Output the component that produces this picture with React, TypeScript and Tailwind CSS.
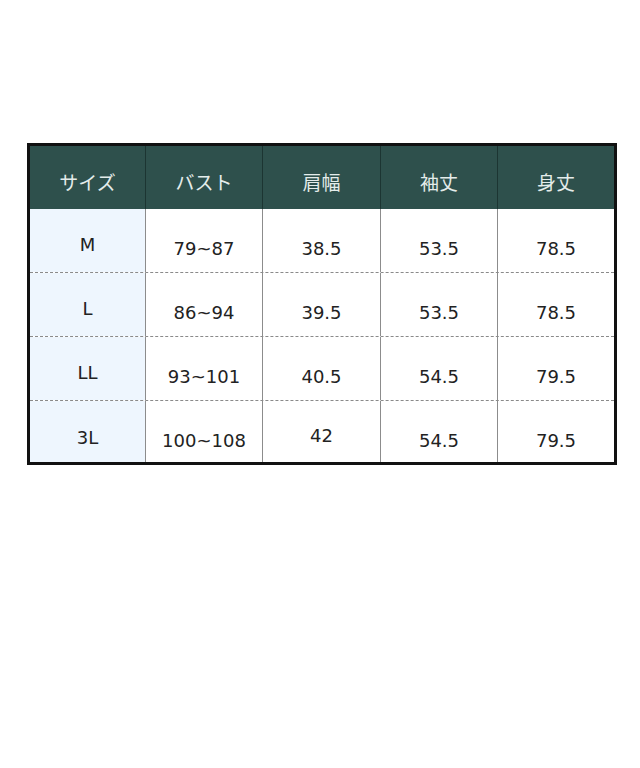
import React from "react";

const headers = ["サイズ", "バスト", "肩幅", "袖丈", "身丈"];

type Cell = { t: string; pt: string };
const rows: { h: string; cells: Cell[] }[] = [
  {
    h: "h-[64px]",
    cells: [
      { t: "M", pt: "pt-[8px]" },
      { t: "79~87", pt: "pt-[16px]" },
      { t: "38.5", pt: "pt-[16px]" },
      { t: "53.5", pt: "pt-[16px]" },
      { t: "78.5", pt: "pt-[16px]" },
    ],
  },
  {
    h: "h-[64px]",
    cells: [
      { t: "L", pt: "pt-[8px]" },
      { t: "86~94", pt: "pt-[16px]" },
      { t: "39.5", pt: "pt-[16px]" },
      { t: "53.5", pt: "pt-[16px]" },
      { t: "78.5", pt: "pt-[16px]" },
    ],
  },
  {
    h: "h-[64px]",
    cells: [
      { t: "LL", pt: "pt-[8px]" },
      { t: "93~101", pt: "pt-[16px]" },
      { t: "40.5", pt: "pt-[16px]" },
      { t: "54.5", pt: "pt-[16px]" },
      { t: "79.5", pt: "pt-[16px]" },
    ],
  },
  {
    h: "h-[61px]",
    cells: [
      { t: "3L", pt: "pt-[12px]" },
      { t: "100~108", pt: "pt-[18px]" },
      { t: "42", pt: "pt-[8px]" },
      { t: "54.5", pt: "pt-[18px]" },
      { t: "79.5", pt: "pt-[18px]" },
    ],
  },
];

export default function App() {
  return (
    <div className="w-[640px] h-[768px] bg-white pt-[143px] pl-[27px]">
      <div className="w-[590px] border-[3px] border-[#111] bg-white">
        <div className="grid grid-cols-[115px_117px_118px_117px_1fr] h-[63px] bg-[#2e504c]">
          {headers.map((h, i) => (
            <div
              key={h}
              className={`flex items-center justify-center pt-[9px] text-[19px] text-[#e4ecea] ${
                i > 0 ? "border-l border-[#1c3532]" : ""
              }`}
              style={{ fontFamily: '"Noto Sans CJK JP", "DejaVu Sans", sans-serif' }}
            >
              {h}
            </div>
          ))}
        </div>
        {rows.map((r, ri) => (
          <div
            key={ri}
            className={`grid grid-cols-[115px_117px_118px_117px_1fr] ${r.h} ${
              ri < rows.length - 1 ? "border-b border-dashed border-[#8a8a8a]" : ""
            }`}
          >
            {r.cells.map((c, ci) => (
              <div
                key={ci}
                className={`flex items-center justify-center ${c.pt} text-[18px] leading-[20px] text-[#222] ${
                  ci === 0 ? "bg-[#eef6fe]" : "border-l border-[#8c8c8c]"
                }`}
                style={{ fontFamily: '"DejaVu Sans", Verdana, sans-serif' }}
              >
                {c.t}
              </div>
            ))}
          </div>
        ))}
      </div>
    </div>
  );
}
